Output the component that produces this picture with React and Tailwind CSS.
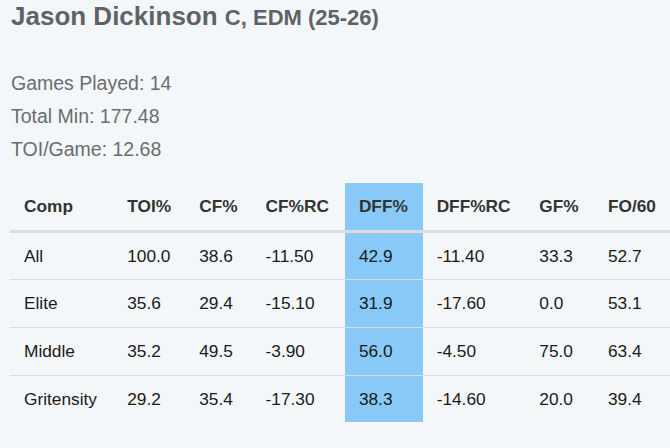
import React from 'react';

const cols = [
  { key: 'comp', label: 'Comp', w: 'w-[104px]' },
  { key: 'toi', label: 'TOI%', w: 'w-[72px]' },
  { key: 'cf', label: 'CF%', w: 'w-[66px]' },
  { key: 'cfrc', label: 'CF%RC', w: 'w-[94px]' },
  { key: 'dff', label: 'DFF%', w: 'w-[78px]', hl: true },
  { key: 'dffrc', label: 'DFF%RC', w: 'w-[103px]' },
  { key: 'gf', label: 'GF%', w: 'w-[69px]' },
  { key: 'fo', label: 'FO/60', w: 'w-[74px]' },
];

const rows = [
  { comp: 'All', toi: '100.0', cf: '38.6', cfrc: '-11.50', dff: '42.9', dffrc: '-11.40', gf: '33.3', fo: '52.7' },
  { comp: 'Elite', toi: '35.6', cf: '29.4', cfrc: '-15.10', dff: '31.9', dffrc: '-17.60', gf: '0.0', fo: '53.1' },
  { comp: 'Middle', toi: '35.2', cf: '49.5', cfrc: '-3.90', dff: '56.0', dffrc: '-4.50', gf: '75.0', fo: '63.4' },
  { comp: 'Gritensity', toi: '29.2', cf: '35.4', cfrc: '-17.30', dff: '38.3', dffrc: '-14.60', gf: '20.0', fo: '39.4' },
];

export default function App() {
  return (
    <div className="min-h-[448px] w-[670px] overflow-hidden bg-[#f4f7fa] pl-[10px] font-['Liberation_Sans',Arial,sans-serif]">
      <h2 className="pl-[1px] pt-[1px] text-[26px] font-bold leading-[30px] text-[#5f6366]">
        Jason Dickinson <span className="text-[22px]">C, EDM (25-26)</span>
      </h2>

      <div className="mt-[34px] pl-[1px] text-[19.5px] leading-[33px] text-[#6a6d70]">
        <div>Games Played: 14</div>
        <div>Total Min: 177.48</div>
        <div>TOI/Game: 12.68</div>
      </div>

      <table className="mt-[17px] table-fixed border-collapse text-left text-[17.3px] leading-[20px]">
        <thead>
          <tr className="h-[48px] border-b-[3px] border-[#dcdcdc]">
            {cols.map(c => (
              <th
                key={c.key}
                className={`${c.w} px-[14px] font-bold text-[#333] ${c.hl ? 'bg-[#88c9f7]' : ''}`}
              >
                {c.label}
              </th>
            ))}
          </tr>
        </thead>
        <tbody>
          {rows.map((r, i) => (
            <tr
              key={r.comp}
              className={i < rows.length - 1 ? 'h-[48px] border-b border-[#dcdcdc]' : 'h-[47px]'}
            >
              {cols.map(c => (
                <td
                  key={c.key}
                  className={`px-[14px] text-[#1a1a1a] ${c.hl ? 'bg-[#88c9f7]' : ''}`}
                >
                  {r[c.key]}
                </td>
              ))}
            </tr>
          ))}
        </tbody>
      </table>
    </div>
  );
}
